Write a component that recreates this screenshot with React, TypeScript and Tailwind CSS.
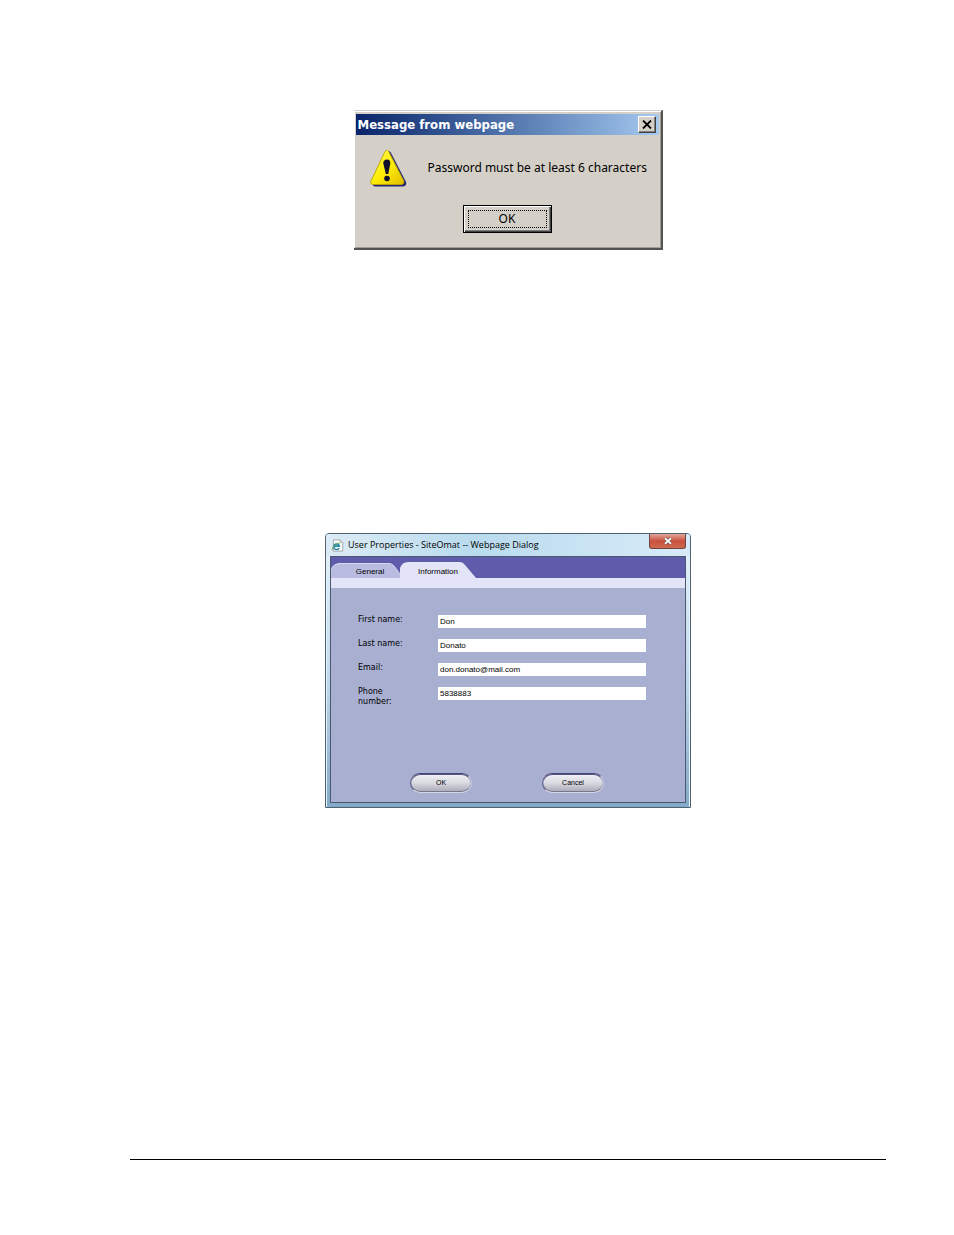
import { useState } from "react";

const fields = [
  { id: "first-name", label: "First name:", value: "Don", type: "text" },
  { id: "last-name", label: "Last name:", value: "Donato", type: "text" },
  { id: "email", label: "Email:", value: "don.donato@mail.com", type: "email" },
  { id: "phone", label: "Phone number:", value: "5838883", type: "tel" },
];

function WarningIcon() {
  return (
    <svg viewBox="0 0 38 38" className="size-[38px] shrink-0" aria-hidden="true">
      <defs>
        <linearGradient id="warn" x1="0" y1="0" x2="1" y2="1">
          <stop offset="0" stopColor="#fff75a" />
          <stop offset="0.5" stopColor="#ffee08" />
          <stop offset="1" stopColor="#e0bd00" />
        </linearGradient>
      </defs>
      <path d="M18.5 2.5 Q20 1 21.8 3.5 L37 33 Q38 37 34 37.500 H6 Q3 37 4 34 Z" fill="#26266e" />
      <path d="M17.500 1.500 Q18.500 0.800 19.800 2.800 L34.800 32 Q35.500 35.200 32.500 35.500 H3.500 Q0.800 35 2 32 L15.500 3.500 Q16.300 1.800 17.500 1.500 Z" fill="url(#warn)" stroke="#bba400" strokeWidth="0.9" />
      <path d="M14.200 14 Q14.500 10.500 18 10.500 Q21.500 10.500 21.300 14.500 L19.300 25 H16.800 Z" fill="#11112b" />
      <circle cx="18" cy="29.500" r="2.800" fill="#11112b" />
    </svg>
  );
}

function BrowserIcon() {
  return (
    <svg viewBox="0 0 14 14" className="size-[13px] shrink-0" aria-hidden="true">
      <path d="M2.500 1 H10 L12.700 3.700 V13 H2.500 Z" fill="#fbfbf8" stroke="#8b9298" strokeWidth="0.800" />
      <path d="M10 1 V3.700 H12.700" fill="#dde3e8" stroke="#8b9298" strokeWidth="0.600" />
      <path d="M8.700 9.800 A3 3 0 1 1 9 7.700 H3.800" fill="none" stroke="#2887ad" strokeWidth="1.700" />
      <path d="M1.200 12 Q0.500 9.500 5 6 Q8.500 3.600 9.800 4.600" fill="none" stroke="#65a83e" strokeWidth="0.900" />
    </svg>
  );
}

function MessageDialog() {
  return (
    <section
      role="alertdialog"
      aria-labelledby="message-title"
      className="flex w-[309px] flex-col border-t border-r-2 border-b-2 border-t-[#d5d1c9] border-r-[#55534f] border-b-[#55534f] bg-[#d4d0c8] pt-[3px] pr-[2px] pl-[2px] shadow-[inset_1px_1px_0_#fff,inset_-1px_-1px_0_#a09d96]"
    >
      <header className="flex h-[21px] items-center justify-between bg-linear-to-r from-[#0a246a] to-[#a6caf0] pr-[3px] pl-[2px]">
        <h1 id="message-title" className="font-['DejaVu_Sans_Condensed','DejaVu_Sans',sans-serif] text-[13px] leading-4 font-bold text-white">
          Message from webpage
        </h1>
        <button
          type="button"
          aria-label="Close message"
          className="flex h-[17px] w-[18px] items-center justify-center border border-t-white border-r-[#404040] border-b-[#404040] border-l-white bg-[#d4d0c8] shadow-[inset_-1px_-1px_0_#808080]"
        >
          <svg viewBox="0 0 10 9" className="h-[9px] w-[10px]" aria-hidden="true">
            <path d="M1 0.500 L9 8.500 M9 0.500 L1 8.500" stroke="#000" strokeWidth="1.800" />
          </svg>
        </button>
      </header>
      <div className="flex items-center gap-[21px] pt-[14px] pl-[13px]">
        <WarningIcon />
        <p className="font-['Noto_Sans',sans-serif] text-[12px] leading-4 whitespace-nowrap text-black">
          Password must be at least 6 characters
        </p>
      </div>
      <div className="flex justify-center pt-[18px] pb-[15px]">
        <button
          type="button"
          className="h-[28px] w-[89px] border border-black bg-[#d4d0c8] p-[4px] font-['Noto_Sans',sans-serif] text-[12px] leading-4 text-black shadow-[inset_1px_1px_0_#fff,inset_-1px_-1px_0_#404040,inset_-2px_-2px_0_#808080]"
        >
          <span className="block border border-dotted border-black">OK</span>
        </button>
      </div>
    </section>
  );
}

function Tabs() {
  return (
    <div role="tablist" className="flex h-[21px] items-end bg-[#5f5dab] text-[8px] leading-3 text-black">
      <button type="button" role="tab" aria-selected="false" className="relative h-[15px] w-[69px] pt-[2px]">
        <svg viewBox="0 0 69 15" preserveAspectRatio="none" className="absolute inset-0 size-full" aria-hidden="true">
          <path d="M0 15 V6 Q3 0.500 8 0.500 H58 Q61 0.500 63 3 L69 11 V15 Z" fill="#b9bce0" />
          <path d="M0 6 Q3 0.500 8 0.500 H58 Q61 0.500 63 3 L69 11" fill="none" stroke="#d5d7f0" />
        </svg>
        <span className="relative pl-[9px]">General</span>
      </button>
      <button type="button" role="tab" aria-selected="true" className="relative h-[16px] w-[76px] pt-[3px]">
        <svg viewBox="0 0 76 16" preserveAspectRatio="none" className="absolute inset-0 size-full" aria-hidden="true">
          <path d="M0 16 V6 Q2 0 8 0 H60 Q63 0 65 3 L76 16 Z" fill="#e3e4f8" />
        </svg>
        <span className="relative">Information</span>
      </button>
    </div>
  );
}

function PillButton({ children, type }: { children: string; type: "button" | "submit" }) {
  return (
    <button
      type={type}
      className="h-[20px] w-[62px] rounded-full border border-t-[#48467f] border-r-[#c9cbe3] border-b-[#d5d6ea] border-l-[#62608f] bg-linear-to-b from-[#f1f1f6] via-[#d9d9e2] to-[#a7a7b6] text-[7px] leading-3 text-black shadow-[inset_0_1px_0_#55527e,inset_0_-1px_0_#77778c]"
    >
      {children}
    </button>
  );
}

function UserDialog() {
  const [values, setValues] = useState(fields.map((field) => field.value));

  return (
    <section
      role="dialog"
      aria-labelledby="user-title"
      className="flex w-[366px] flex-col rounded-t-[4px] border border-[#4f6274] bg-linear-to-b from-[#e6f2fa] via-[#c5dcee] via-50% to-[#84a9c8] px-[4px] pb-[4px] font-['Liberation_Sans',Arial,sans-serif] shadow-[inset_1px_0_0_#e4f2fc,inset_-1px_0_0_#e4f2fc]"
    >
      <header className="-mx-[4px] flex h-[22px] items-start justify-between rounded-t-[3px] bg-linear-to-r from-[#dcebf5] via-[#b9dbee] via-40% to-[#d8ebf8] pr-[4px] pl-[5px]">
        <div className="flex h-[22px] items-center gap-[4px]">
          <BrowserIcon />
          <h2 id="user-title" className="font-['Open_Sans',sans-serif] text-[9px] leading-3 text-black">
            User Properties - SiteOmat -- Webpage Dialog
          </h2>
        </div>
        <button
          type="button"
          aria-label="Close dialog"
          className="flex h-[15px] w-[37px] items-center justify-center rounded-b-[3px] border border-t-0 border-[#71443f] bg-linear-to-b from-[#dfa59a] via-[#c9503e] via-50% to-[#cf6a50]"
        >
          <svg viewBox="0 0 10 8" className="h-[8px] w-[10px]" aria-hidden="true">
            <path d="M2 1.200 L8 6.800 M8 1.200 L2 6.800" stroke="#6b4340" strokeWidth="3.200" />
            <path d="M2 1.200 L8 6.800 M8 1.200 L2 6.800" stroke="#fff" strokeWidth="1.900" />
          </svg>
        </button>
      </header>
      <div className="border border-[#4b5870] bg-[#a9afd1]">
        <Tabs />
        <div className="h-[10px] bg-[#e3e4f8]" />
        <form onSubmit={(event) => event.preventDefault()} className="pt-[27px] pb-[9px]">
          <div className="flex flex-col gap-[11px] pr-[39px] pl-[27px]">
            {fields.map((field, index) => (
              <div key={field.id} className="flex h-[13px] items-start">
                <label
                  htmlFor={field.id}
                  className="w-[80px] shrink-0 pr-[30px] font-['DejaVu_Sans',sans-serif] text-[8px] leading-[10px] text-black"
                >
                  {field.label}
                </label>
                <input
                  id={field.id}
                  type={field.type}
                  value={values[index]}
                  onChange={(event) => setValues(values.map((value, i) => (i === index ? event.target.value : value)))}
                  className="h-[13px] min-w-0 flex-1 bg-white px-[2px] text-[8px] leading-3 text-black outline-none"
                />
              </div>
            ))}
          </div>
          <div className="flex justify-center gap-[70px] pt-[73px] pr-[2px]">
            <PillButton type="submit">OK</PillButton>
            <PillButton type="button">Cancel</PillButton>
          </div>
        </form>
      </div>
    </section>
  );
}

export default function App() {
  return (
    <div className="min-h-screen bg-white pt-[110px] pr-[68px] pb-[75px] pl-[130px]">
      <main className="flex flex-col items-center gap-[283px]">
        <MessageDialog />
        <UserDialog />
      </main>
      <hr className="mt-[351px] border-t border-black" />
    </div>
  );
}
